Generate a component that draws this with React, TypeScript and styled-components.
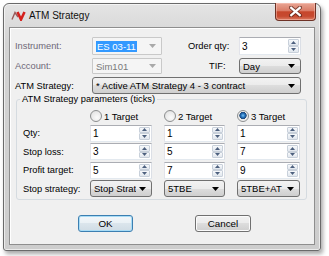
import React from "react";
import styled, { createGlobalStyle } from "styled-components";

const Global = createGlobalStyle`
  html, body { margin: 0; padding: 0; background: #ffffff; }
  body { font-family: "Liberation Sans", Arial, sans-serif; }
  #root { width: 329px; height: 256px; overflow: hidden; }
`;

const Page = styled.div`
  padding: 3px 0 0 3px;
`;

const Window = styled.div`
  width: 318px;
  height: 248px;
  box-sizing: border-box;
  border: 1px solid #6a6a6a;
  border-radius: 6px 6px 3px 3px;
  background: linear-gradient(#e4e4e4, #d3d3d3 40px, #cdcdcd);
  box-shadow: 2px 3px 4px rgba(0, 0, 0, 0.35), inset 0 0 0 1px rgba(255, 255, 255, 0.6);
  display: flex;
  flex-direction: column;
`;

const TitleBar = styled.div`
  height: 23px;
  flex: none;
  display: flex;
  align-items: center;
  padding-left: 7px;
`;

const TitleText = styled.span`
  font-size: 10px;
  color: #111;
  margin-left: 3px;
`;

const CloseButton = styled.div`
  align-self: flex-start;
  margin: -1px 4px 0 auto;
  width: 41px;
  height: 18px;
  box-sizing: border-box;
  border: 1px solid #6e3226;
  border-top: none;
  border-radius: 0 0 4px 4px;
  background: linear-gradient(#e9a695 0%, #da7d68 45%, #c6462b 52%, #c64a30 78%, #dc7c62 100%);
  box-shadow: inset 0 0 0 1px rgba(255, 210, 200, 0.45);
  display: flex;
  align-items: center;
  justify-content: center;
`;

const ClientFrame = styled.div`
  flex: 1;
  display: flex;
  padding: 0 5px 5px 5px;
`;

const Client = styled.div`
  flex: 1;
  background: #f0f0f0;
  border: 1px solid #8e8e8e;
  box-shadow: inset 1px 1px 0 #ffffff;
  display: flex;
  flex-direction: column;
`;

const TopGrid = styled.div`
  display: grid;
  grid-template-columns: 77px 70px 77px 62px;
  grid-template-rows: 18px 16px 17px;
  row-gap: 3px;
  padding: 9px 0 0 5px;
  align-items: center;
`;

const Label = styled.span<{ $indent?: number; $disabled?: boolean }>`
  font-size: 9.3px;
  color: ${(p) => (p.$disabled ? "#6e6878" : "#000")};
  padding-left: ${(p) => p.$indent ?? 0}px;
  white-space: nowrap;
`;

const ComboBox = styled.div<{ $disabled?: boolean; $span?: number }>`
  box-sizing: border-box;
  height: 100%;
  display: flex;
  align-items: center;
  overflow: hidden;
  font-size: 9.5px;
  white-space: nowrap;
  grid-column: span ${(p) => p.$span ?? 1};
  border: 1px solid ${(p) => (p.$disabled ? "#c9c9c9" : "#707070")};
  border-radius: ${(p) => (p.$disabled ? "1px" : "3px")};
  background: ${(p) =>
    p.$disabled
      ? "#f5f5f5"
      : "linear-gradient(#f2f2f2 0%, #ebebeb 50%, #dddddd 50%, #cfcfcf 100%)"};
  color: ${(p) => (p.$disabled ? "#7a7a7a" : "#000")};
  padding-left: 2px;
`;

const ComboText = styled.span`
  flex: 1;
  overflow: hidden;
  padding-left: 1px;
`;

const Selection = styled.span`
  background: #3399ff;
  color: #fff;
  padding: 1px 1px;
`;

const ArrowSlot = styled.span`
  flex: none;
  width: 13px;
  display: flex;
  justify-content: center;
  margin-right: 2px;
`;

const Spin = styled.div`
  box-sizing: border-box;
  height: 100%;
  display: flex;
  background: #fff;
  border: 1px solid;
  border-color: #abadb3 #dbdfe6 #e3e9ef #e2e3ea;
`;

const SpinValue = styled.span`
  flex: 1;
  font-size: 10px;
  padding-left: 2px;
  display: flex;
  align-items: center;
`;

const SpinButtons = styled.div`
  flex: none;
  width: 11px;
  display: flex;
  flex-direction: column;
  padding: 1px 1px 1px 0;
`;

const SpinBtn = styled.div`
  flex: 1;
  border: 1px solid #c8d0da;
  border-radius: 1px;
  background: linear-gradient(#f7f9fb, #e1e7ee);
  display: flex;
  align-items: center;
  justify-content: center;
`;

const Group = styled.fieldset`
  margin: 0 7px 0 6px;
  padding: 4.5px 4px 2px 3px;
  border: 1px solid #d5dbe0;
  border-radius: 3px;
  min-width: 0;
`;

const GroupTitle = styled.legend`
  padding: 0 2px;
  font-size: 9.3px;
  line-height: 11px;
  color: #000;
`;

const ParamGrid = styled.div`
  display: grid;
  grid-template-columns: 55px 62px 61px 63px;
  grid-template-rows: 13.5px repeat(4, 17px);
  column-gap: 12px;
  row-gap: 1.5px;
  padding-left: 3px;
  align-items: center;
`;

const RadioOption = styled.label`
  display: flex;
  align-items: center;
  gap: 2px;
  font-size: 9.5px;
  color: #000;
  white-space: nowrap;
`;

const RadioDot = styled.span<{ $checked?: boolean }>`
  width: 12px;
  height: 12px;
  box-sizing: border-box;
  border-radius: 50%;
  border: 1px solid #8c8e8f;
  background: ${(p) =>
    p.$checked
      ? "radial-gradient(circle at 50% 45%, #7fc4f3 0, #2f7fc7 1.6px, #1a4f8e 3px, #274e78 3.4px, #e9e9e9 3.9px, #fafafa 100%)"
      : "radial-gradient(circle at 60% 65%, #fbfbfb 0, #e9e9e9 60%, #d4d4d4 100%)"};
`;

const ButtonRow = styled.div`
  display: flex;
  gap: 62px;
  padding-left: 68px;
  margin-top: 15px;
`;

const DlgButton = styled.button<{ $default?: boolean }>`
  width: ${(p) => (p.$default ? 55 : 56)}px;
  height: 17px;
  box-sizing: border-box;
  padding: 0;
  font-family: "Liberation Sans", Arial, sans-serif;
  font-size: 9.8px;
  color: #000;
  border: 1px solid ${(p) => (p.$default ? "#3c7fb1" : "#707070")};
  border-radius: 3px;
  background: ${(p) =>
    p.$default
      ? "linear-gradient(#f3f7fa 0%, #e9f0f5 50%, #dbe5ec 50%, #d0dce5 100%)"
      : "linear-gradient(#f2f2f2 0%, #ebebeb 50%, #dddddd 50%, #cfcfcf 100%)"};
  box-shadow: inset 0 0 0 1px ${(p) => (p.$default ? "#a8dcf6" : "#fbfbfb")};
`;

const Logo = () => (
  <svg width="15" height="11" viewBox="0 0 15 11">
    <path d="M1 9.5 L4 2.5 L7 7" fill="none" stroke="#9a5a5a" strokeWidth="1.4" />
    <path d="M6.5 2 L10 9.5 L13.5 2" fill="none" stroke="#d4201c" strokeWidth="2.6" strokeLinejoin="miter" />
  </svg>
);

const CloseGlyph = () => (
  <svg width="13" height="11" viewBox="0 0 13 11">
    <path d="M2 1.5 L11 9.5 M11 1.5 L2 9.5" stroke="rgba(70,25,15,0.65)" strokeWidth="4" strokeLinecap="square" />
    <path d="M2.2 1.8 L10.8 9.2 M10.8 1.8 L2.2 9.2" stroke="#ffffff" strokeWidth="2.2" strokeLinecap="square" />
  </svg>
);

const DownArrow = ({ color }: { color: string }) => (
  <svg width="7" height="4" viewBox="0 0 7 4">
    <path d="M0 0 H7 L3.5 4 Z" fill={color} />
  </svg>
);

const SmallArrow = ({ up }: { up?: boolean }) => (
  <svg width="5" height="3" viewBox="0 0 5 3">
    <path d={up ? "M0 3 H5 L2.5 0 Z" : "M0 0 H5 L2.5 3 Z"} fill="#4d607e" />
  </svg>
);

const Combo: React.FC<{ children: React.ReactNode; disabled?: boolean; span?: number }> = ({
  children,
  disabled,
  span,
}) => (
  <ComboBox $disabled={disabled} $span={span}>
    <ComboText>{children}</ComboText>
    <ArrowSlot>
      <DownArrow color={disabled ? "#a9a9a9" : "#000"} />
    </ArrowSlot>
  </ComboBox>
);

const Spinner: React.FC<{ value: string }> = ({ value }) => (
  <Spin>
    <SpinValue>{value}</SpinValue>
    <SpinButtons>
      <SpinBtn>
        <SmallArrow up />
      </SpinBtn>
      <SpinBtn>
        <SmallArrow />
      </SpinBtn>
    </SpinButtons>
  </Spin>
);

const targets = [
  { name: "1 Target", checked: false },
  { name: "2 Target", checked: false },
  { name: "3 Target", checked: true },
];

const rows: { label: string; values: string[] }[] = [
  { label: "Qty:", values: ["1", "1", "1"] },
  { label: "Stop loss:", values: ["3", "5", "7"] },
  { label: "Profit target:", values: ["5", "7", "9"] },
];

const stopStrategies = ["Stop Strategy", "5TBE", "5TBE+AT"];

export default function App() {
  return (
    <>
      <Global />
      <Page>
        <Window>
          <TitleBar>
            <Logo />
            <TitleText>ATM Strategy</TitleText>
            <CloseButton>
              <CloseGlyph />
            </CloseButton>
          </TitleBar>
          <ClientFrame>
            <Client>
              <TopGrid>
                <Label $disabled>Instrument:</Label>
                <Combo disabled>
                  <Selection>ES 03-11</Selection>
                </Combo>
                <Label $indent={26}>Order qty:</Label>
                <Spinner value="3" />

                <Label $disabled>Account:</Label>
                <Combo disabled>Sim101</Combo>
                <Label $indent={47}>TIF:</Label>
                <Combo>Day</Combo>

                <Label>ATM Strategy:</Label>
                <Combo span={3}>* Active ATM Strategy 4 - 3 contract</Combo>
              </TopGrid>

              <Group>
                <GroupTitle>ATM Strategy parameters (ticks)</GroupTitle>
                <ParamGrid>
                  <span />
                  {targets.map((t) => (
                    <RadioOption key={t.name}>
                      <RadioDot $checked={t.checked} />
                      {t.name}
                    </RadioOption>
                  ))}
                  {rows.map((r) => (
                    <React.Fragment key={r.label}>
                      <Label>{r.label}</Label>
                      {r.values.map((v, i) => (
                        <Spinner key={i} value={v} />
                      ))}
                    </React.Fragment>
                  ))}
                  <Label>Stop strategy:</Label>
                  {stopStrategies.map((s) => (
                    <Combo key={s}>{s}</Combo>
                  ))}
                </ParamGrid>
              </Group>

              <ButtonRow>
                <DlgButton $default>OK</DlgButton>
                <DlgButton>Cancel</DlgButton>
              </ButtonRow>
            </Client>
          </ClientFrame>
        </Window>
      </Page>
    </>
  );
}
